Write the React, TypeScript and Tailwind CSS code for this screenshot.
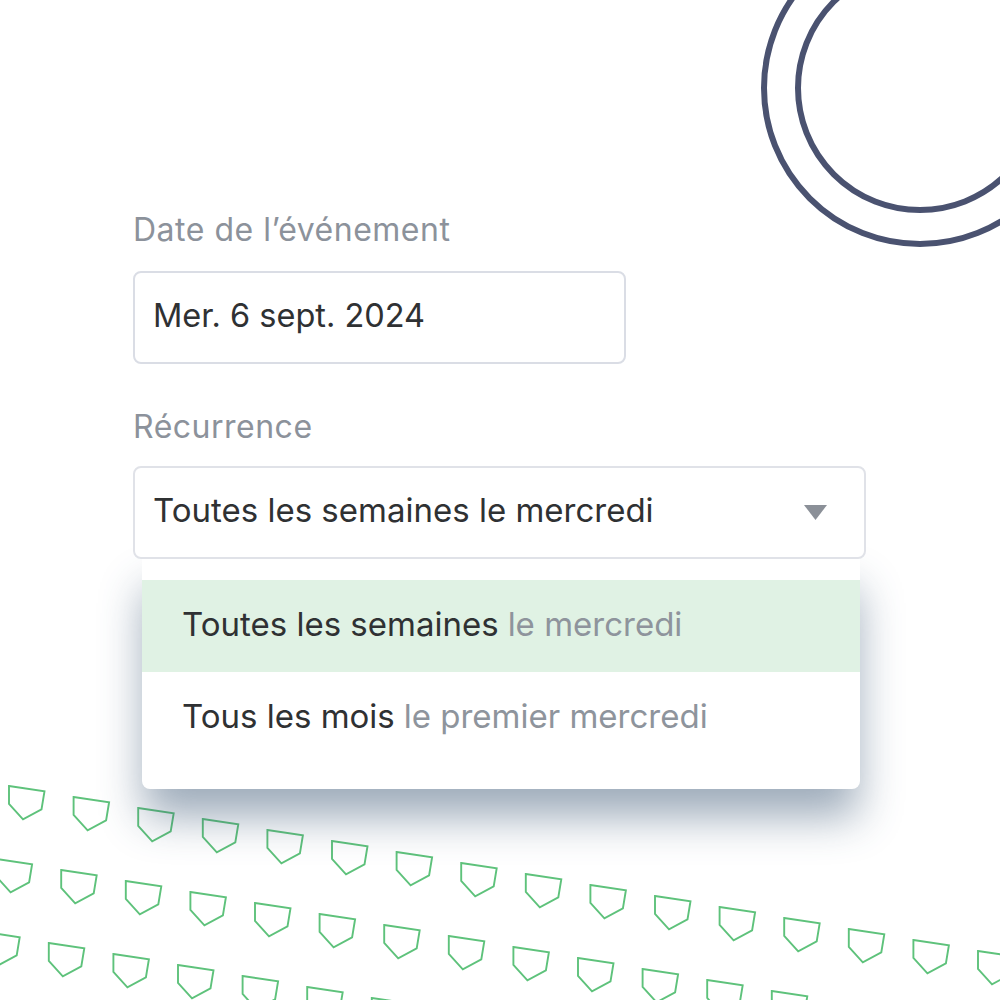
import React from "react";

const PENT: [number, number][] = [
  [0, 0],
  [35.5, 5.2],
  [32.5, 23.3],
  [14, 33.3],
  [0, 18],
];

function Pentagons() {
  const shapes: string[] = [];
  const p0 = [9, 786];
  const u = [64.6, 11.0];
  const v = [-12.4, 73];
  for (let j = 0; j < 3; j++) {
    for (let i = -1; i < 17; i++) {
      const x = p0[0] + i * u[0] + j * v[0];
      const y = p0[1] + i * u[1] + j * v[1];
      if (x > 1010 || y > 1010) continue;
      shapes.push(PENT.map(([a, b]) => `${(x + a).toFixed(1)},${(y + b).toFixed(1)}`).join(" "));
    }
  }
  return (
    <svg className="absolute inset-0" width="1000" height="1000" viewBox="0 0 1000 1000">
      {shapes.map((pts, k) => (
        <polygon key={k} points={pts} fill="none" stroke="#5ec27b" strokeWidth="1.9" strokeLinejoin="miter" />
      ))}
      <circle cx="920" cy="88" r="156" fill="none" stroke="#4a5270" strokeWidth="6" />
      <circle cx="920" cy="88" r="122" fill="none" stroke="#4a5270" strokeWidth="6" />
    </svg>
  );
}

export default function App() {
  return (
    <div
      className="relative w-[1000px] h-[1000px] overflow-hidden bg-white"
      style={{ fontFamily: "Inter, 'Noto Sans', sans-serif" }}
    >
      <Pentagons />
      <div className="relative flex flex-col pl-[133px] pt-[212px]">
        <div className="text-[32px] leading-[36px] text-[#8c929b] tracking-[0.5px]">Date de l’événement</div>
        <div className="mt-[23px] w-[493px] h-[93px] rounded-[8px] border-2 border-[#dadde5] flex items-center pl-[18px] pb-[2px]">
          <span className="text-[32.5px] text-[#2f3133]">Mer. 6 sept. 2024</span>
        </div>
        <div className="mt-[45px] text-[32px] leading-[36px] text-[#8c929b] tracking-[0.5px]">Récurrence</div>
        <div className="relative">
          <div className="relative z-10 mt-[21px] w-[733px] h-[93px] rounded-[8px] border-2 border-[#e0e2e8] bg-white flex items-center justify-between pl-[18px] pr-[37px]">
            <span className="text-[33px] text-[#2f3133] -mt-[4px]">Toutes les semaines le mercredi</span>
            <svg width="23" height="15" viewBox="0 0 23 15">
              <polygon points="0,0 23,0 11.5,15" fill="#8b9098" />
            </svg>
          </div>
          <div className="ml-[9px] w-[718px] -mt-[2px] pt-[23px] pb-[25px] bg-white rounded-b-[8px] shadow-[0_30px_44px_-2px_rgba(50,80,110,0.48)]">
            <div className="h-[92px] bg-[#e0f2e4] flex items-center pl-[40px] text-[33px] pb-[2px]">
              <span className="text-[#2f3133]">Toutes les semaines</span>
              <span className="text-[#8e949c] ml-[9px]">le mercredi</span>
            </div>
            <div className="h-[92px] flex items-center pl-[40px] text-[33px] pb-[2px]">
              <span className="text-[#2f3133]">Tous les mois</span>
              <span className="text-[#8e949c] ml-[9px]">le premier mercredi</span>
            </div>
          </div>
        </div>
      </div>
    </div>
  );
}
